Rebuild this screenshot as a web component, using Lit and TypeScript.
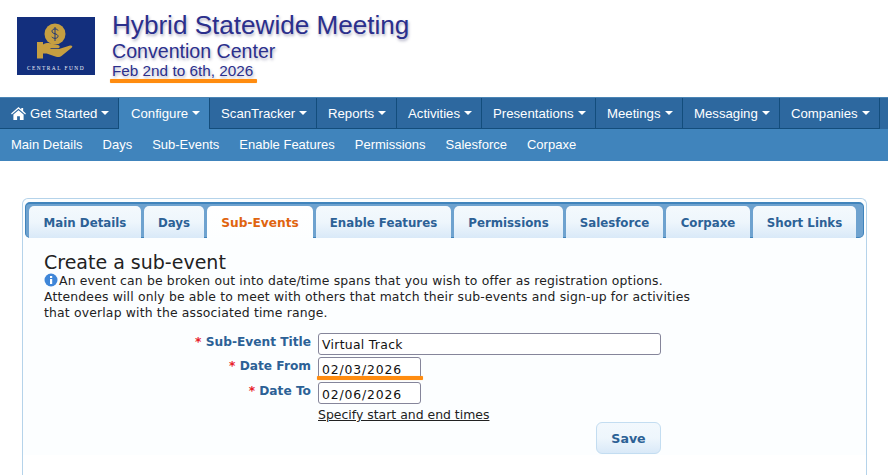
import { LitElement, html, css } from "lit";
import { customElement } from "lit/decorators.js";

const navItems = ["ScanTracker", "Reports", "Activities", "Presentations", "Meetings", "Messaging", "Companies"];
const navWidths = [107, 80, 85, 114, 87, 97, 100];
const subItems = ["Main Details", "Days", "Sub-Events", "Enable Features", "Permissions", "Salesforce", "Corpaxe"];
const tabs = [
  ["Main Details", 112], ["Days", 60], ["Sub-Events", 106], ["Enable Features", 135], ["Permissions", 109],
  ["Salesforce", 97], ["Corpaxe", 84], ["Short Links", 103],
] as const;

@customElement("app-root")
export class AppRoot extends LitElement {
  static styles = css`
    :host { display: block; width: 888px; height: 475px; overflow: hidden; background: #fff; font-family: "Liberation Sans", Arial, sans-serif; position: relative; }
    .header { height: 97px; display: flex; box-sizing: border-box; padding: 17px 0 0 17px; gap: 17px; }
    .logo { width: 78px; height: 58px; display: block; }
    .titles { color: #2b2f8c; text-shadow: 1px 2px 3px rgba(60, 60, 110, .4); margin-top: -7px; position: relative; height: 70px; }
    .t1 { font-size: 26.1px; line-height: 30px; height: 31px; white-space: nowrap; }
    .t2 { font-size: 19.6px; line-height: 21px; height: 20px; }
    .t3 { font-size: 15.3px; line-height: 20px; }
    .hl { position: absolute; background: #ff8c10; height: 4px; border-radius: 1px; box-shadow: 0 0 1px #ffc070; }
    .hl.a { left: -2px; top: 69px; width: 147px; }
    .nav { height: 32px; background: #2d689f; border-top: 1px solid #4a85b5; box-sizing: border-box; display: flex; color: #fff; font-size: 13.2px; }
    .nav > div { box-sizing: border-box; display: flex; align-items: center; padding-left: 11px; gap: 4px; border-right: 1px solid #134d7c; border-bottom: 1px solid #134d7c; white-space: nowrap; }
    .nav > div.active { background: #4084bc; border-bottom: none; padding-left: 12px; padding-bottom: 1px; }
    .caret { width: 0; height: 0; border-left: 4px solid transparent; border-right: 4px solid transparent; border-top: 4px solid #fff; }
    .sub { height: 32px; background: #4084bc; display: flex; align-items: center; color: #fff; font-size: 13px; padding-left: 11px; gap: 20px; padding-bottom: 1px; box-sizing: border-box; }
    .panel { margin: 37px 21px 0 22px; height: 278px; border: 1px solid #b5d3ea; border-bottom: none; border-radius: 6px 6px 0 0; box-sizing: border-box; background: linear-gradient(#fcfeff 256px, #fff 256px); padding: 3px 2px 0 2px; font-family: "DejaVu Sans", Verdana, sans-serif; position: relative; }
    .tabs { height: 36px; box-sizing: border-box; background: #6ea2cf; border-top: 2px solid #4084bc; border-bottom: 1px solid #4084bc; border-left: 1px solid #4084bc; border-right: 1px solid #4084bc; border-radius: 5px; display: flex; padding: 2px 5px 0 3px; gap: 3px; }
    .tab { box-sizing: border-box; height: 32px; padding-top: 2px; border-radius: 5px 5px 0 0; background: linear-gradient(#f4f9fd 0%, #eef6fc 50%, #d9e9f8 100%); color: #2c6196; font-weight: 700; font-size: 11.8px; display: flex; align-items: center; justify-content: center; white-space: nowrap; }
    .tab.on { background: linear-gradient(#ffffff, #fcfeff); color: #e0640f; height: 33px; padding-top: 1px; font-size: 12.2px; }
    .body { padding: 13px 0 0 19px; color: #222; }
    h2 { font-weight: 400; margin: 0; font-size: 19px; line-height: 22px; color: #222; }
    .desc { font-size: 12.4px; line-height: 16px; white-space: nowrap; color: #222; letter-spacing: .17px; }
    .info { width: 14px; height: 14px; vertical-align: -2px; margin-right: 1px; }
    .form { display: grid; grid-template-columns: 267px auto; column-gap: 7px; margin: 12px 0 0 0; width: 637px; }
    .lab { text-align: right; font-weight: 700; color: #2c6196; font-size: 12.2px; line-height: 18px; height: 20px; white-space: nowrap; }
    .lab i { color: #e8202a; font-style: normal; }
    .inp { box-sizing: border-box; height: 22px; border: 1px solid #85859a; border-radius: 3px; background: #fff; color: #111; font-size: 12.4px; line-height: 20px; padding: 1px 3px 0; letter-spacing: .3px; }
    .inp.w { width: 343px; margin-bottom: 2px; }
    .inp.s { width: 103px; margin: 0 0 3px; padding-top: 2px; position: relative; letter-spacing: .85px; }
    .hl.b { left: -2px; top: 18px; width: 106px; height: 4px; }
    .link { grid-column: 2; font-size: 12.45px; color: #222; text-decoration: underline; line-height: 16px; height: 15px; white-space: nowrap; }
    .actions { grid-column: 2; display: flex; justify-content: flex-end; width: 343px; }
    .save { width: 65px; height: 32px; box-sizing: border-box; border: 1px solid #c3ddf1; border-radius: 6px; background: linear-gradient(#f2f8fd 0%, #eef6fc 50%, #d9e9f8 100%); color: #2c6196; font: 700 12.6px "DejaVu Sans", sans-serif; display: flex; align-items: center; justify-content: center; }
  `;

  render() {
    return html`
      <div class="header">
        <svg class="logo" viewBox="0 0 78 58">
          <rect width="78" height="58" fill="#132f7d"></rect>
          <circle cx="38" cy="17" r="10.5" fill="#c69f41"></circle>
          <path d="M41 13.5c-.6-2-5.800-2.300-6 .6-.2 3.400 6.200 2 6 5.300-.2 2.600-5.200 2.400-6.200.4M38 10v14" fill="none" stroke="#132f7d" stroke-width=".9"></path>
          <path d="M20 25h6v2.500c3-1.800 6.500-1.800 9-.8l6.500 1.500c1.900.5 1.500 3-.5 3h-7.500v.8h8.500l11-3.500c2-.5 3.200.9 1.600 2.200l-9.500 7.800c-2 1.600-4 1.700-6 1.200l-9.500-3.200h-3.600v5h-6z" fill="#c69f41"></path>
          <text x="39" y="53" text-anchor="middle" font-family="Liberation Serif, serif" font-size="5.400" letter-spacing="1.450" fill="#f0f2fa">CENTRAL FUND</text>
        </svg>
        <div class="titles">
          <div class="t1">Hybrid Statewide Meeting</div>
          <div class="t2">Convention Center</div>
          <div class="t3">Feb 2nd to 6th, 2026</div>
          <div class="hl a"></div>
        </div>
      </div>
      <div class="nav">
        <div style="width:119px">
          <svg width="15" height="13" viewBox="0 0 16 14"><path d="M8 0l3 2.600V1h2v3.300L16 7l-.8 1L8 1.800.8 8 0 7zM2.500 8.200L8 3.500l5.500 4.700V14h-4v-4h-3v4h-4z" fill="#fff"></path></svg>
          <span>Get Started</span><span class="caret"></span>
        </div>
        <div class="active" style="width:91px"><span>Configure</span><span class="caret"></span></div>
        ${navItems.map((n, i) => html`<div style="width:${navWidths[i]}px"><span>${n}</span><span class="caret"></span></div>`)}
      </div>
      <div class="sub">${subItems.map((s) => html`<span>${s}</span>`)}</div>
      <div class="panel">
        <div class="tabs">
          ${tabs.map(([t, w]) => html`<div class="tab ${t === "Sub-Events" ? "on" : ""}" style="width:${w}px">${t}</div>`)}
        </div>
        <div class="body">
          <h2>Create a sub-event</h2>
          <div class="desc"><svg class="info" viewBox="0 0 14 14"><circle cx="7" cy="7" r="6.500" fill="#3f86d8"></circle><rect x="6" y="6" width="2.200" height="5" fill="#fff"></rect><rect x="6" y="3" width="2.200" height="2" fill="#fff"></rect></svg>An event can be broken out into date/time spans that you wish to offer as registration options.<br>Attendees will only be able to meet with others that match their sub-events and sign-up for activities<br>that overlap with the associated time range.</div>
          <div class="form">
            <div class="lab"><i>*</i> Sub-Event Title</div><div class="inp w">Virtual Track</div>
            <div class="lab"><i>*</i> Date From</div><div class="inp s">02/03/2026<div class="hl b"></div></div>
            <div class="lab"><i>*</i> Date To</div><div class="inp s">02/06/2026</div>
            <div class="link">Specify start and end times</div>
            <div class="actions"><div class="save">Save</div></div>
          </div>
        </div>
      </div>
    `;
  }
}
